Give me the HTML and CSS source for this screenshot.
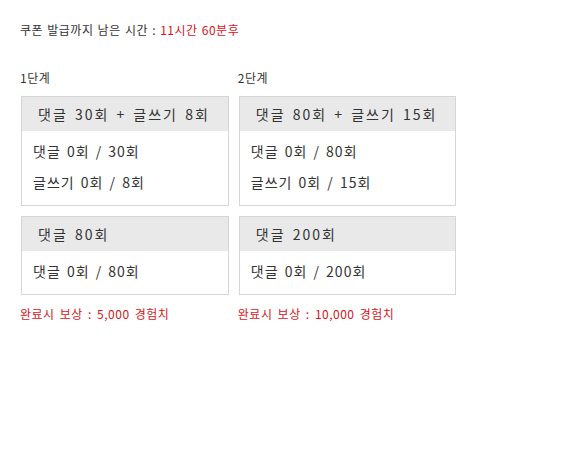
FILE: index.html
```html
<!DOCTYPE html>
<html>
  <head>
    <title>Mission</title>
    <link rel="stylesheet" href="styles.css">
  </head>
  <body>
    <div class="mission">
      <p class="timer">쿠폰 발급까지 남은 시간 : <span class="red">11시간 60분후</span></p>

      <div class="steps">
        <section class="step">
          <p class="step-title">1단계</p>
          <div class="box">
            <h2>댓글 30회 + 글쓰기 8회</h2>
            <ul>
              <li>댓글 0회 / 30회</li>
              <li>글쓰기 0회 / 8회</li>
            </ul>
          </div>
          <div class="box">
            <h2>댓글 80회</h2>
            <ul>
              <li>댓글 0회 / 80회</li>
            </ul>
          </div>
          <p class="reward">완료시 보상 : 5,000 경험치</p>
        </section>

        <section class="step">
          <p class="step-title">2단계</p>
          <div class="box">
            <h2>댓글 80회 + 글쓰기 15회</h2>
            <ul>
              <li>댓글 0회 / 80회</li>
              <li>글쓰기 0회 / 15회</li>
            </ul>
          </div>
          <div class="box">
            <h2>댓글 200회</h2>
            <ul>
              <li>댓글 0회 / 200회</li>
            </ul>
          </div>
          <p class="reward">완료시 보상 : 10,000 경험치</p>
        </section>
      </div>
    </div>
  </body>
</html>
```

FILE: styles.css
```css
body {
    margin: 0;
    padding: 0;
    background: #fff;
    color: #333;
    font-family: "Noto Sans CJK KR", "Noto Sans", sans-serif;
}

.mission {
    padding: 20px;
}

p {
    margin: 0;
}

.timer {
    font-size: 12px;
    line-height: 20px;
    letter-spacing: 0.5px;
    word-spacing: 1px;
}

.red {
    color: #d8141c;
}

.steps {
    display: flex;
    align-items: flex-start;
    gap: 9px;
    margin-top: 28px;
}

.step-title {
    font-size: 12px;
    line-height: 20px;
    letter-spacing: 0.5px;
    margin-bottom: 8px;
}

.box {
    border: 1px solid #d6d6d6;
    margin-left: 1px;
    margin-bottom: 10px;
}

.box h2 {
    margin: 0;
    height: 34px;
    line-height: 34px;
    padding: 0 18px 0 16px;
    background: #e9e9e9;
    font-size: 14px;
    font-weight: normal;
    letter-spacing: 2px;
    word-spacing: 2px;
    white-space: nowrap;
}

.box ul {
    list-style: none;
    margin: 0;
    padding: 5px 11px 7px;
}

.box li {
    font-size: 14px;
    line-height: 31px;
    letter-spacing: 1px;
    word-spacing: 2px;
    white-space: nowrap;
}

.reward {
    color: #d8141c;
    font-size: 12px;
    line-height: 20px;
    letter-spacing: 0.5px;
    word-spacing: 2px;
    margin-top: -1px;
}
```
